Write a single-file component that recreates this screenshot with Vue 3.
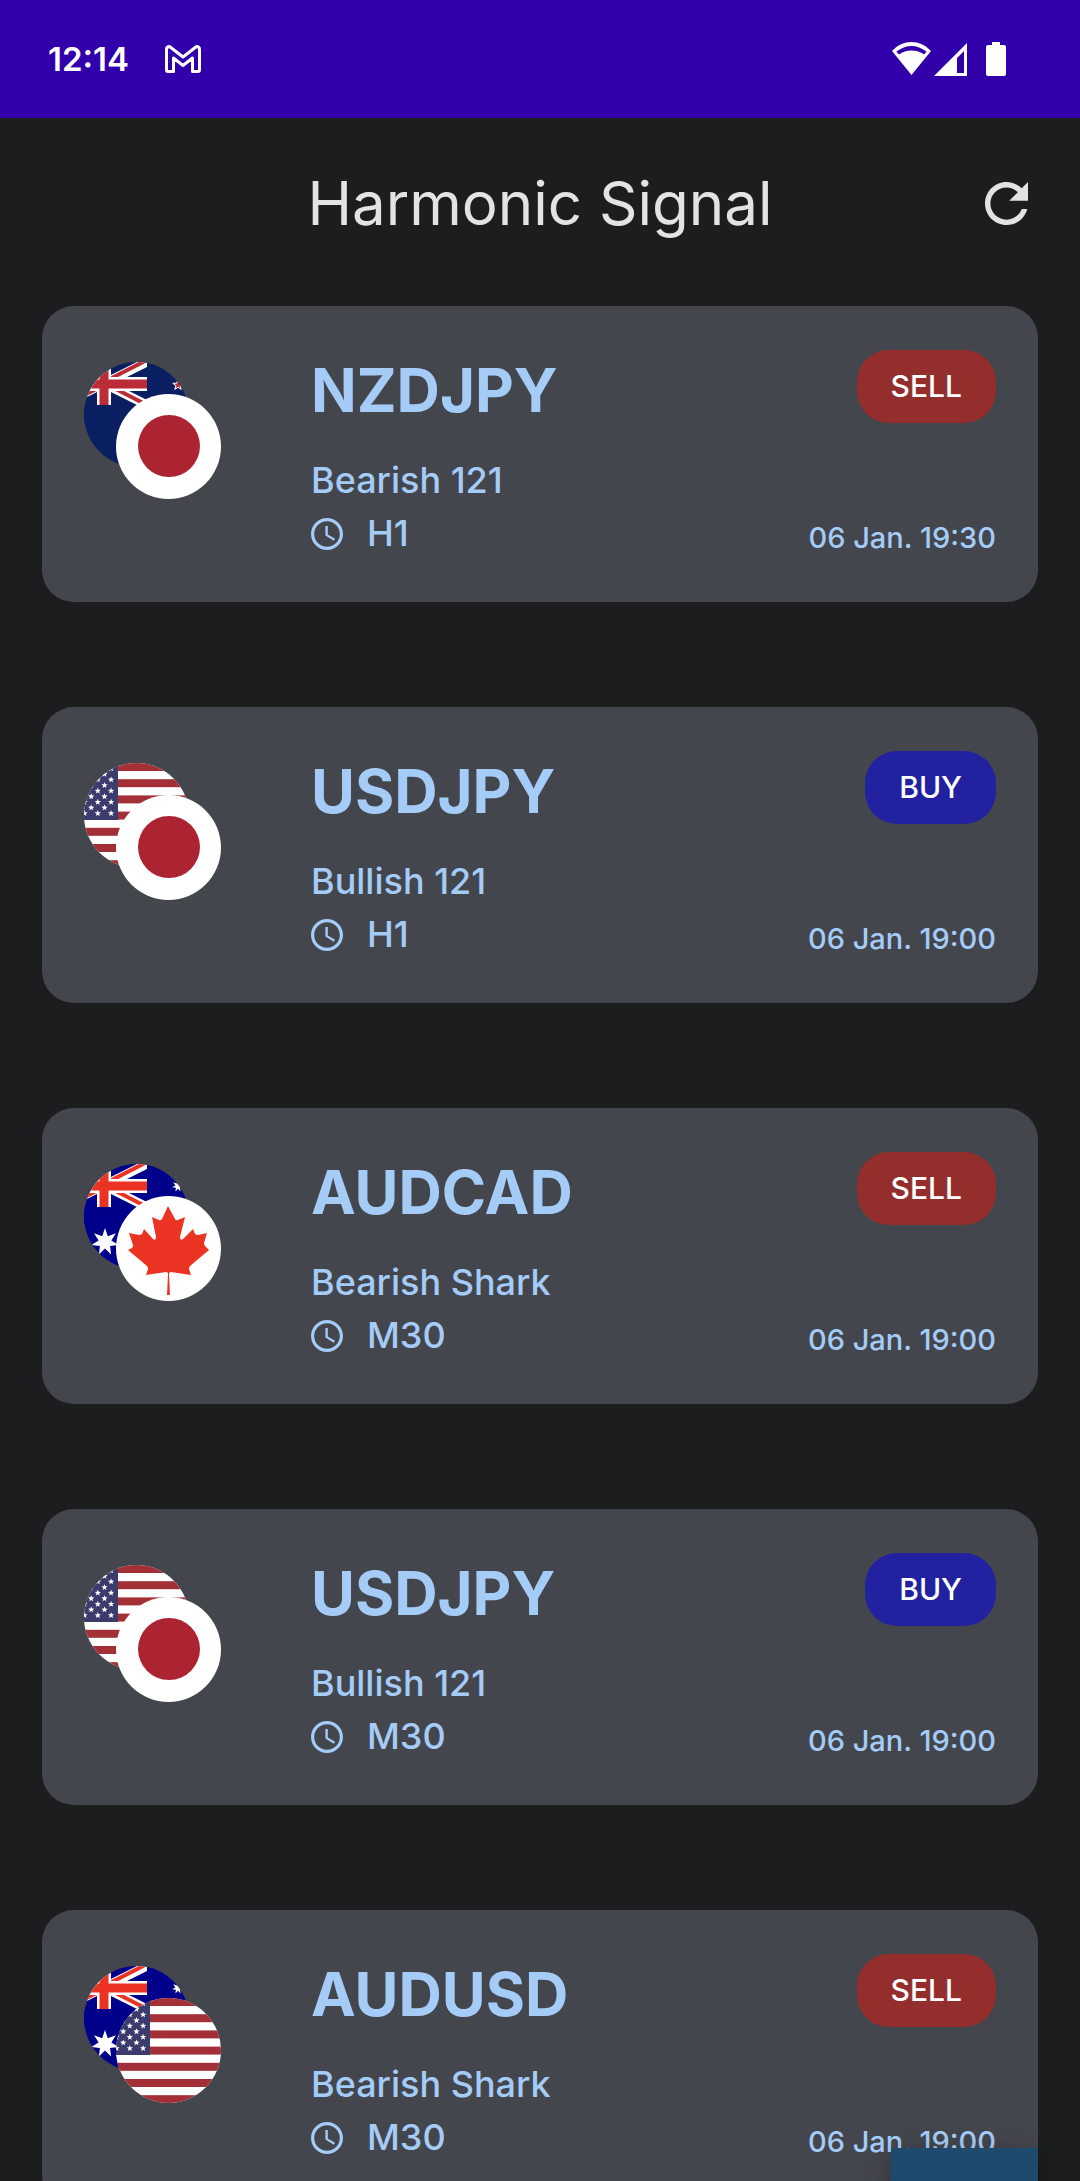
<template>
  <div class="screen">
    <div class="status-bar">
      <div class="status-left">
        <span class="clock">12:14</span>
        <svg class="gmail" viewBox="0 0 36 28" aria-hidden="true">
          <path
            d="M1.5 4.5Q1.5 1.5 4.5 1.5L18 12L31.5 1.5Q34.5 1.5 34.5 4.5V25Q34.5 26.5 33 26.5H27.5V13L18 20.5L8.5 13V26.5H3Q1.5 26.5 1.5 25Z"
            fill="none" stroke="#fff" stroke-width="3" stroke-linejoin="round"
          />
        </svg>
      </div>
      <div class="status-right">
        <svg class="wifi" viewBox="0 0 39 34" aria-hidden="true">
          <path
            fill="#fff" fill-rule="evenodd"
            d="M0 9C11-3 28-3 39 9L19.5 33ZM4.5 9.5L7 12.5C14 7 25 7 32 12.5L34.5 9.5C25 2 14 2 4.5 9.5Z"
          />
        </svg>
        <svg class="signal" viewBox="0 0 33 33" aria-hidden="true">
          <path fill="#fff" fill-rule="evenodd" d="M33 0V33H0ZM30 8L23 15V30H30Z" />
        </svg>
        <svg class="battery" viewBox="0 0 20 34" aria-hidden="true">
          <path
            fill="#fff"
            d="M6 0H14V3H18Q20 3 20 5V32Q20 34 18 34H2Q0 34 0 32V5Q0 3 2 3H6Z"
          />
        </svg>
      </div>
    </div>

    <header class="app-bar">
      <h1 class="title">Harmonic Signal</h1>
      <button class="refresh" type="button" aria-label="Refresh">
        <svg viewBox="4 4 16 16" aria-hidden="true">
          <path
            fill="currentColor"
            d="M17.65 6.35C16.2 4.9 14.21 4 12 4c-4.42 0-7.99 3.58-7.99 8s3.57 8 7.99 8c3.73 0 6.84-2.55 7.73-6h-2.08c-.82 2.33-3.04 4-5.65 4-3.31 0-6-2.69-6-6s2.69-6 6-6c1.66 0 3.14.69 4.22 1.78L13 11h7V4l-2.35 2.35z"
          />
        </svg>
      </button>
    </header>

    <main class="signals">
      <article v-for="(signal, index) in signals" :key="index" class="card">
        <div class="flags">
          <svg
            v-for="(code, i) in signal.flags"
            :key="code"
            class="flag"
            :class="{ front: i === 1 }"
            viewBox="0 0 105 105"
            aria-hidden="true"
          >
            <!-- Union jack canton shared by Australia and New Zealand -->
            <g v-if="code === 'nz' || code === 'au'">
              <rect width="105" height="105" :fill="code === 'nz' ? '#0a1f62' : '#00008b'" />
              <path d="M-23 0L63 43M63 0L-23 43" stroke="#fff" stroke-width="9" />
              <path
                d="M63 -2L20 20M-23 45L20 23M20 21L63 43M20 21L-23 0"
                :stroke="unionRed(code)" stroke-width="4"
              />
              <path d="M20 0V43M-23 22H63" stroke="#fff" stroke-width="14" />
              <path d="M20 0V43M-23 22H63" :stroke="unionRed(code)" stroke-width="9" />
              <!-- Covers the diagonal ends that run past the canton -->
              <path d="M63 0H80V60H0V43H63Z" :fill="code === 'nz' ? '#0a1f62' : '#00008b'" />
              <polygon v-if="code === 'au'" :points="star(21, 78, 14, 6.5, 7)" fill="#fff" />
              <polygon v-if="code === 'au'" :points="star(94, 22, 6, 2.7, 7)" fill="#fff" />
              <polygon
                v-if="code === 'nz'" :points="star(94, 23, 5.5, 2.2, 5)"
                :fill="unionRed(code)" stroke="#fff" stroke-width="1"
              />
            </g>
            <g v-else-if="code === 'us'">
              <rect width="105" height="105" fill="#fff" />
              <rect
                v-for="n in 7" :key="n"
                :y="(n - 1) * 16.2" width="105" height="8" fill="#a23036"
              />
              <rect width="34" height="57" fill="#3c3b6e" />
              <polygon
                v-for="(p, n) in usStars" :key="'s' + n"
                :points="star(p.x, p.y, 3.3, 1.4, 5)" fill="#fff"
              />
            </g>
            <g v-else-if="code === 'jp'">
              <rect width="105" height="105" fill="#fff" />
              <circle cx="53" cy="52" r="31" fill="#ac2331" />
            </g>
            <g v-else>
              <rect width="105" height="105" fill="#fff" />
              <path
                fill="#ea3323"
                d="M52 10L59 23Q60 25 62 24L69 21L64 41Q64 45 67 43L77 33L79 38Q80 39 82 39L91 37L88 47Q88 49 89 50L93 54L74 70Q73 71 73 73L75 79L55 76Q53 76 53 78L54 99H51L52 78Q52 76 50 76L30 79L32 73Q32 71 31 70L12 54L16 52Q17 51 17 49L13 37L23 39Q25 39 26 38L28 33L37 43Q40 45 40 41L36 21L43 24Q44 25 46 23Z"
              />
            </g>
          </svg>
        </div>

        <div class="info">
          <h2 class="pair">{{ signal.pair }}</h2>
          <p class="pattern">{{ signal.pattern }}</p>
          <p class="timeframe">
            <svg class="clock-icon" viewBox="2 2 20 20" aria-hidden="true">
              <path
                fill="currentColor"
                d="M11.99 2C6.47 2 2 6.48 2 12s4.47 10 9.99 10C17.52 22 22 17.52 22 12S17.52 2 11.99 2zM12 20c-4.42 0-8-3.58-8-8s3.58-8 8-8 8 3.58 8 8-3.58 8-8 8zm.5-13H11v6l5.25 3.15.75-1.23-4.5-2.67z"
              />
            </svg>
            <span>{{ signal.timeframe }}</span>
          </p>
        </div>

        <div class="side">
          <span class="badge" :class="signal.side.toLowerCase()">{{ signal.side }}</span>
          <time class="date">{{ signal.date }}</time>
        </div>
      </article>
    </main>

    <button class="fab" type="button" aria-label="Filter"></button>
  </div>
</template>

<script setup>
const signals = [
  { pair: 'NZDJPY', flags: ['nz', 'jp'], pattern: 'Bearish 121', timeframe: 'H1', side: 'SELL', date: '06 Jan. 19:30' },
  { pair: 'USDJPY', flags: ['us', 'jp'], pattern: 'Bullish 121', timeframe: 'H1', side: 'BUY', date: '06 Jan. 19:00' },
  { pair: 'AUDCAD', flags: ['au', 'ca'], pattern: 'Bearish Shark', timeframe: 'M30', side: 'SELL', date: '06 Jan. 19:00' },
  { pair: 'USDJPY', flags: ['us', 'jp'], pattern: 'Bullish 121', timeframe: 'M30', side: 'BUY', date: '06 Jan. 19:00' },
  { pair: 'AUDUSD', flags: ['au', 'us'], pattern: 'Bearish Shark', timeframe: 'M30', side: 'SELL', date: '06 Jan. 19:00' }
]

function unionRed(code) {
  return code === 'nz' ? '#b92c38' : '#ea3323'
}

// Points of a star with its first tip pointing up
function star(cx, cy, outer, inner, tips) {
  const points = []
  for (let i = 0; i < tips * 2; i++) {
    const r = i % 2 ? inner : outer
    const angle = (Math.PI * i) / tips - Math.PI / 2
    points.push(`${(cx + r * Math.cos(angle)).toFixed(2)},${(cy + r * Math.sin(angle)).toFixed(2)}`)
  }
  return points.join(' ')
}

const usStars = []
for (let row = 0; row < 9; row++) {
  const start = row % 2 ? 7.2 : 0.5
  for (let x = start; x < 32; x += 13.3) {
    usStars.push({ x, y: 5.5 + row * 5.6 })
  }
}
</script>

<style>
body {
  background: #1c1d1e;
}
</style>

<style scoped>
.screen {
  position: relative;
  height: 100vh;
  overflow: hidden;
  background: #1c1d1e;
  color: #a5cbf7;
  font-family: Inter, "Liberation Sans", sans-serif;
}

.status-bar {
  display: flex;
  align-items: center;
  justify-content: space-between;
  height: 118px;
  padding: 0 74px 0 48px;
  box-sizing: border-box;
  background: #3100ab;
  color: #fff;
}

.status-left,
.status-right {
  display: flex;
  align-items: center;
}

.status-left {
  gap: 36px;
}

.clock {
  font-size: 33px;
  font-weight: 600;
}

.gmail {
  width: 36px;
  height: 28px;
}

.wifi {
  width: 39px;
  height: 34px;
}

.signal {
  width: 33px;
  height: 33px;
  margin-left: 3px;
}

.battery {
  width: 20px;
  height: 34px;
  margin-left: 19px;
}

.app-bar {
  display: grid;
  grid-template-columns: 1fr auto 1fr;
  align-items: center;
  height: 170px;
  padding: 0 52px;
}

.title {
  grid-column: 2;
  margin: 0;
  color: #e3e2e4;
  font-size: 60px;
  font-weight: 400;
  line-height: 72px;
}

.refresh {
  justify-self: end;
  width: 43px;
  height: 43px;
  padding: 0;
  border: 0;
  background: none;
  color: #e3e2e4;
  cursor: pointer;
}

.refresh svg {
  display: block;
}

.signals {
  display: flex;
  flex-direction: column;
  gap: 105px;
  padding: 18px 42px;
}

.card {
  display: flex;
  height: 296px;
  padding: 44px 42px 40px;
  box-sizing: border-box;
  border-radius: 32px;
  background: #44464d;
}

.flags {
  flex: none;
  display: grid;
  align-content: start;
  width: 227px;
  padding-top: 12px;
}

.flag {
  grid-area: 1 / 1;
  width: 105px;
  height: 105px;
  border-radius: 50%;
}

/* Second flag overlaps the first */
.flag.front {
  margin: 32px 0 0 32px;
}

.info {
  flex: 1;
}

.pair {
  margin: 4px 0 28px;
  font-size: 60px;
  font-weight: 700;
  line-height: 72px;
}

.pattern,
.timeframe {
  margin: 0;
  font-size: 36px;
  font-weight: 500;
  line-height: 53px;
}

.timeframe {
  display: flex;
  align-items: center;
  gap: 24px;
}

.clock-icon {
  width: 32px;
  height: 32px;
}

.side {
  display: flex;
  flex-direction: column;
  align-items: flex-end;
  justify-content: space-between;
}

.badge {
  padding: 18px 34px;
  border-radius: 32px;
  color: #fff;
  font-size: 30px;
  font-weight: 500;
  line-height: 37px;
}

.badge.sell {
  background: #932e2d;
}

.badge.buy {
  background: #2222a0;
}

.date {
  font-size: 29px;
  font-weight: 500;
  line-height: 48px;
}

.fab {
  position: absolute;
  right: 42px;
  bottom: -114px;
  width: 147px;
  height: 147px;
  border: 0;
  background: #1e4a6d;
  box-shadow: 0 8px 24px rgba(0, 0, 0, 0.3);
  cursor: pointer;
}
</style>
